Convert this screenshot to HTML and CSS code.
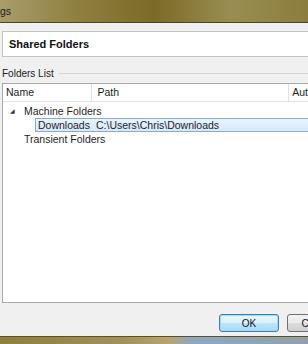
FILE: index.html
```html
<!DOCTYPE html>
<html lang="en">
<head>
  <meta charset="UTF-8">
  <title>Settings</title>
  <link rel="stylesheet" href="styles.css">
</head>
<body>
  <div class="titlebar"><span class="title">gs</span></div>
  <div class="dialog">
    <div class="heading">Shared Folders</div>

    <div class="group-label"><span>Folders List</span></div>

    <div class="list">
      <div class="list-header">
        <div class="col col-name">Name</div>
        <div class="col col-path">Path</div>
        <div class="col col-auto">Aut</div>
      </div>
      <div class="list-body">
        <div class="row group"><span class="arrow">&#9698;</span>Machine Folders</div>
        <div class="row item selected"><span class="cell-name">Downloads</span><span class="cell-path">C:\Users\Chris\Downloads</span></div>
        <div class="row group">Transient Folders</div>
      </div>
    </div>

    <div class="buttons">
      <button class="btn btn-default">OK</button>
      <button class="btn">Cancel</button>
    </div>
  </div>
  <div class="bottom-edge"></div>
</body>
</html>
```
FILE: styles.css
```css
html, body {
  margin: 0;
  padding: 0;
  width: 308px;
  height: 344px;
  overflow: hidden;
}
body {
  font-family: "Liberation Sans", Arial, sans-serif;
  font-size: 10.5px;
  color: #1e1e1e;
  background-color: #f0f0f0;
}
.titlebar {
  height: 23px;
  background: linear-gradient(90deg, #a89c6a 0%, #8f8040 25%, #7c6b28 50%, #998d52 75%, #8b7d3d 100%);
  border-bottom: 1px solid #4f4520;
  box-sizing: border-box;
}
.title {
  display: inline-block;
  line-height: 22px;
  font-size: 10.5px;
  color: #222;
}
.dialog {
  height: 313px;
  padding: 8px 0 0 2px;
  box-sizing: border-box;
  display: flex;
  flex-direction: column;
}
.heading {
  height: 26px;
  box-sizing: border-box;
  background: #fff;
  border: 1px solid #c3c3c3;
  border-right: none;
  padding-left: 6px;
  line-height: 24px;
  font-weight: bold;
  font-size: 11px;
  color: #111;
}
.group-label {
  display: flex;
  align-items: center;
  margin-top: 10px;
  height: 12px;
  color: #222;
  font-size: 10px;
}
.group-label::after {
  content: "";
  flex: 1;
  height: 1px;
  background: #d5d5d5;
  margin-left: 5px;
}
.list {
  margin-top: 4px;
  height: 220px;
  box-sizing: border-box;
  background: #fff;
  border: 1px solid #a8a8a8;
  border-right: none;
}
.list-header {
  display: flex;
  height: 17px;
  border-bottom: 1px solid #e3e3e3;
  line-height: 17px;
}
.col {
  padding-left: 3px;
  box-sizing: border-box;
  border-right: 1px solid #e3e3e3;
}
.col-name { width: 90px; }
.col-path { width: 198px; padding-left: 5px; }
.col-auto { flex: 1; border-right: none; }
.list-body {
  padding-top: 2px;
}
.row {
  height: 14px;
  line-height: 14px;
}
.group {
  padding-left: 21px;
  position: relative;
}
.arrow {
  position: absolute;
  left: 7px;
  top: 0;
  font-size: 6px;
  color: #333;
}
.item {
  margin-left: 32px;
  border: 1px solid #84acdd;
  border-right: none;
  background: linear-gradient(#eaf3fd, #d7e8fb);
  display: flex;
  line-height: 12px;
  box-sizing: border-box;
}
.cell-name {
  width: 58px;
  flex-shrink: 0;
  padding-left: 2px;
}
.buttons {
  display: flex;
  margin-top: 11px;
  padding-left: 217px;
  gap: 8px;
}
.btn {
  width: 60px;
  height: 18px;
  flex-shrink: 0;
  font-family: inherit;
  font-size: 10px;
  color: #111;
  border: 1px solid #707070;
  border-radius: 3px;
  background: linear-gradient(#f2f2f2 0%, #ebebeb 50%, #dddddd 51%, #cfcfcf 100%);
  padding: 0;
}
.btn-default {
  border-color: #3c7fb1;
  box-shadow: inset 0 0 0 1px #9fdcf4;
  background: linear-gradient(#eaf6fd 0%, #d9f0fc 50%, #bee6fd 51%, #a7d9f5 100%);
}
.bottom-edge {
  height: 8px;
  background: linear-gradient(90deg, #8d7f3c 0%, #a0925a 40%, #b6a572 55%, #8da7c0 62%, #92a1a9 100%);
  border-top: 1px solid #5c5024;
}
```
